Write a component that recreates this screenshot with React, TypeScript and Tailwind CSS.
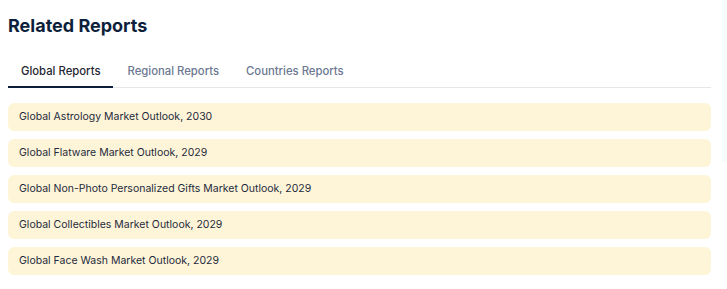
import React from "react";

const items = [
  "Global Astrology Market Outlook, 2030",
  "Global Flatware Market Outlook, 2029",
  "Global Non-Photo Personalized Gifts Market Outlook, 2029",
  "Global Collectibles Market Outlook, 2029",
  "Global Face Wash Market Outlook, 2029",
];

export default function App() {
  return (
    <div className="flex w-[727px] h-[289px] bg-white" style={{ fontFamily: "Inter, 'Noto Sans', sans-serif" }}>
      <div className="w-[703px] ml-2 shrink-0">
        <h2 className="mt-[13px] text-[18px] leading-[26px] font-bold text-[#0e1f3b]">Related Reports</h2>
        <div className="mt-[19px] flex border-b border-[#e5e7eb] h-[30px]">
          <div className="px-[13px] text-[11.3px] leading-[26px] font-medium text-[#1f2733] border-b-2 border-[#0e1f3b] h-[30px]">Global Reports</div>
          <div className="px-[14px] text-[11.3px] leading-[26px] font-medium text-[#6b7892]">Regional Reports</div>
          <div className="px-[13px] text-[11.3px] leading-[26px] font-medium text-[#6b7892]">Countries Reports</div>
        </div>
        <div className="mt-[15px] flex flex-col gap-2">
          {items.map((t) => (
            <div key={t} className="h-[28px] flex items-center px-[11px] rounded-md bg-[#fef5d9] text-[10.5px] text-[#1e2a3b]">
              {t}
            </div>
          ))}
        </div>
      </div>
      <div className="ml-[11px] w-[5px] h-[162px] bg-[#f6fcfb]"></div>
    </div>
  );
}
